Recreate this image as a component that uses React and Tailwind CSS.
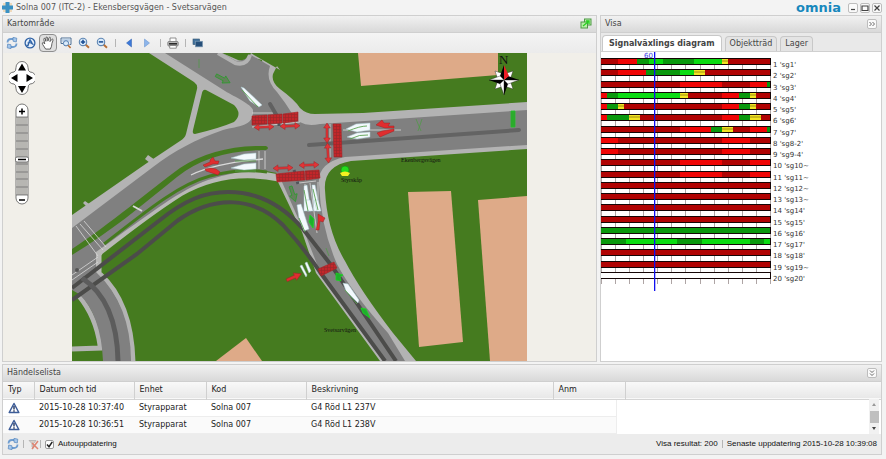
import clsx from 'clsx';

// D/R dark and bright red, G/g dark and bright green, Y yellow, W empty
const COLORS = { D: '#b00303', R: '#f00505', G: '#0a980d', g: '#0bdc12', Y: '#f2e321', W: '#ffffff' };

const signals = [
    { label: "1 'sg1'", phases: 'D17 R36 G48 g62 G93 g121 Y127 D169' },
    { label: "2 'sg2'", phases: 'D17 R45 G79 g93 Y104 D169' },
    { label: "3 'sg3'", phases: 'D79 R121 D149 R166 G169' },
    { label: "4 'sg4'", phases: 'R6 G17 g79 Y87 D121 R138 G149 Y155 D169' },
    { label: "5 'sg5'", phases: 'R6 G17 Y23 D121 R138 G149 Y155 D169' },
    { label: "6 'sg6'", phases: 'R6 G28 Y39 D121 R138 G149 Y160 D169' },
    { label: "7 'sg7'", phases: 'D79 R110 G121 Y132 D149 R166 G169' },
    { label: "8 'sg8-2'", phases: 'R17 D121 R149 D169' },
    { label: "9 'sg9-4'", phases: 'R17 D121 R149 D169' },
    { label: "10 'sg10~", phases: 'D79 R121 D149 R169' },
    { label: "11 'sg11~", phases: 'D79 R121 D149 R169' },
    { label: "12 'sg12~", phases: 'D169' },
    { label: "13 'sg13~", phases: 'D169' },
    { label: "14 'sg14'", phases: 'D169' },
    { label: "15 'sg15'", phases: 'D169' },
    { label: "16 'sg16'", phases: 'G169' },
    { label: "17 'sg17'", phases: 'G25 g76 G101 g149 G163 g169' },
    { label: "18 'sg18'", phases: 'D169' },
    { label: "19 'sg19~", phases: 'D169' },
    { label: "20 'sg20'", phases: 'W169' },
];

const events = [
    { time: '2015-10-28 10:37:40', unit: 'Styrapparat', code: 'Solna 007', text: 'G4 Röd L1 237V' },
    { time: '2015-10-28 10:36:51', unit: 'Styrapparat', code: 'Solna 007', text: 'G4 Röd L1 238V' },
];

function PanelHeader({ title, children }) {
    return (
        <div className="flex h-[17px] shrink-0 items-center justify-between border-b border-[#cfcfcf] bg-linear-to-b from-[#f1f1f1] to-[#d9d9d9] pr-1 pl-1">
            <h2 className="text-[8px] leading-3 text-[#444]">{title}</h2>
            {children}
        </div>
    );
}

function ToolButton({ label, active, narrow, children }) {
    return (
        <button
            type="button"
            aria-label={label}
            className={clsx('flex h-[18px] items-center justify-center', narrow ? 'w-4' : 'w-[18px]', {
                'rounded-sm border border-[#8f8f8f] bg-[#dedede]': active,
            })}
        >
            {children}
        </button>
    );
}

function Separator() {
    return <span className="mx-1 h-2 w-px bg-[#b5b5b5]" />;
}

function Icon({ children, className }) {
    return (
        <svg viewBox="0 0 12 12" className={clsx('shrink-0', className ?? 'h-3 w-3')} fill="none">
            {children}
        </svg>
    );
}

function RefreshIcon() {
    return (
        <Icon>
            <path d="M1.5 5.5Q1.700 2 5 2H7.500" stroke="#6f9dd0" strokeWidth="1.8" />
            <path d="M7 .3 10.8 1.2 10.3 5 7 4.2Z" fill="#a5c6ea" stroke="#4379b5" strokeWidth=".6" />
            <path d="M10.5 6.5Q10.300 10 7 10H4.500" stroke="#6f9dd0" strokeWidth="1.8" />
            <path d="M5 11.7 1.2 10.8 1.7 7 5 7.8Z" fill="#a5c6ea" stroke="#4379b5" strokeWidth=".6" />
        </Icon>
    );
}

function GlobeIcon() {
    return (
        <Icon>
            <circle cx="6" cy="6" r="4.9" fill="#e7f0fb" stroke="#2f62a5" strokeWidth="1.3" />
            <path d="M6 2.5 4 8.6 2.3 8M6 2.5 8.5 7 9.6 7.5M3.6 6.2Q6 4.7 8.5 7" stroke="#2f62a5" strokeWidth="1.3" />
            <path d="M4.8 5 6 2.6 7.2 5Z" fill="#3f77bd" />
        </Icon>
    );
}

function HandIcon() {
    return (
        <Icon className="h-[14px] w-[14px]">
            <path
                d="M4 11.2 1.4 7.2Q.6 5.8 1.6 5.6 2.3 5.5 3.2 6.8L2.4 2.8Q2.4 1.8 3.1 1.9 3.7 1.9 4.2 4.6L4.3 1.6Q4.5.6 5.1.8 5.8.8 5.9 4.4L6.9 1.5Q7.3.8 7.9 1.2 8.3 1.5 7.7 4.8L9.3 2.9Q10 2.4 10.3 3 10.5 3.6 9.4 6.3 9.3 8.9 8 11.2Z"
                fill="#fff"
                stroke="#444"
                strokeWidth=".7"
            />
        </Icon>
    );
}

function ZoomIcon({ sign }) {
    return (
        <Icon>
            <path d="m7.5 7.5 3.5 3.3" stroke="#b96f35" strokeWidth="1.9" />
            <circle cx="5" cy="4.9" r="3.7" fill="#d9eafa" stroke="#5e86b3" strokeWidth="1.1" />
            <path d={sign === '+' ? 'M5 2.7v4.4M2.8 4.9h4.4' : 'M2.8 4.9h4.4'} stroke="#164a91" strokeWidth="1.5" />
        </Icon>
    );
}

function ZoomAreaIcon() {
    return (
        <Icon>
            <path d="M3 6.5H1V1h10v6.5H9.5" stroke="#4e7196" strokeWidth="1" />
            <path d="M2 1.7h8v3H2z" fill="#bdd2e8" />
            <circle cx="6" cy="6.3" r="2.6" fill="#d9eafa" stroke="#4f7bad" strokeWidth="1" />
            <path d="m8 8.3 2.6 2.6" stroke="#b96f35" strokeWidth="1.6" />
        </Icon>
    );
}

function PrinterIcon() {
    return (
        <Icon>
            <path d="M3 4.5V1h6v3.5" fill="#fff" stroke="#777" strokeWidth=".8" />
            <rect x=".8" y="4.5" width="10.4" height="4.5" rx="1" fill="#b5b5b5" stroke="#777" strokeWidth=".8" />
            <path d="M2 6.8h8" stroke="#222" strokeWidth="1.5" />
            <path d="M2.7 8.5h6.6v2.7H2.7z" fill="#fff" stroke="#777" strokeWidth=".8" />
        </Icon>
    );
}

function Toolbar() {
    return (
        <div className="flex h-5 shrink-0 items-center bg-linear-to-b from-[#f4f4f4] to-[#ebebeb]">
            <ToolButton label="Uppdatera">
                <RefreshIcon />
            </ToolButton>
            <ToolButton label="Hela kartan">
                <GlobeIcon />
            </ToolButton>
            <ToolButton label="Panorera" active>
                <HandIcon />
            </ToolButton>
            <ToolButton label="Zooma område">
                <ZoomAreaIcon />
            </ToolButton>
            <ToolButton label="Zooma in">
                <ZoomIcon sign="+" />
            </ToolButton>
            <ToolButton label="Zooma ut">
                <ZoomIcon sign="-" />
            </ToolButton>
            <Separator />
            <ToolButton label="Föregående">
                <Icon>
                    <path d="M8.5 2v8L3.5 6Z" fill="#3c78d8" stroke="#2b5cad" strokeWidth=".5" />
                </Icon>
            </ToolButton>
            <ToolButton label="Nästa">
                <Icon>
                    <path d="M3.5 2v8l5-4Z" fill="#8db5ea" stroke="#5e8fce" strokeWidth=".5" />
                </Icon>
            </ToolButton>
            <Separator />
            <ToolButton label="Skriv ut" narrow>
                <PrinterIcon />
            </ToolButton>
            <Separator />
            <ToolButton label="Lager" narrow>
                <Icon>
                    <rect x="1" y="2" width="6.5" height="5.5" fill="#45749e" stroke="#31536f" strokeWidth=".6" />
                    <rect x="3.500" y="4.3" width="7" height="5.500" fill="#264f79" stroke="#7795b0" strokeWidth=".7" />
                </Icon>
            </ToolButton>
        </div>
    );
}

function PanZoomControl() {
    return (
        <svg viewBox="0 0 26 146" className="absolute top-[6px] left-[6px] h-[146px] w-[26px]">
            <path
                d="M7 8.5a6 6 0 0 1 12 0q0 4 2 4.500a6 6 0 0 1 0 12q-2 .5-2 4.500a6 6 0 0 1-12 0q0-4-2-4.500a6 6 0 0 1 0-12q2-.5 2-4.500Z"
                fill="#fff"
                stroke="#555"
                strokeWidth=".8"
            />
            <path d="M13 4.500l4 7H9ZM13 34l4-7H9ZM2 19l6.500-4v8ZM24 19l-6.500-4v8Z" fill="#000" />
            <path d="M7 51a6 6 0 0 1 12 0v88a6 6 0 0 1-12 0Z" fill="#fff" stroke="#555" strokeWidth=".8" />
            <rect x="7.500" y="58" width="11" height="78" fill="#b7b6b2" />
            {[66, 74, 82, 90, 105, 113, 120, 128].map((y) => (
                <path key={y} d={`M7 ${y}h12`} stroke="#666" strokeWidth=".7" />
            ))}
            <path d="M7 58h12M7 136h12" stroke="#555" strokeWidth=".7" />
            <rect x="6.500" y="98" width="13" height="5" rx="1.500" fill="#fff" stroke="#555" strokeWidth=".8" />
            <path d="M9 100.500h8M10 52.500h6M13 49.500v6M10 141h6" stroke="#000" strokeWidth="1.500" />
        </svg>
    );
}

// Stop lines and pedestrian crossings share the hatched red block
const crossings = [
    '252,116 267,115 267,124 252,125',
    '268,115 282,114 282,123 268,124',
    '283,114 298,112 298,121 283,123',
    '333,124 341,124 342,157 334,157',
    '276,174 304,171 305,180 277,182',
    '305,171 319,170 320,178 306,180',
    '318,269 334,262 337,268 321,276',
];

const doubleArrows = [
    [264, 127, -2],
    [290, 126, -2],
    [283, 168, -2],
    [309, 165, -2],
    [327, 133, 90],
    [328, 153, 87],
];

const vehicles = [
    '241,87 244,88 262,105 259,107 250,101',
    '231,158 244,154 256,153 256,159 244,160',
    '231,168 244,164 256,163 256,169 244,170',
    '346,129 356,124 370,123 370,130 357,132',
    '347,137 357,133 370,132 370,137 357,139',
    '304,186 307,185 311,211 304,211',
    '312,185 315,185 320,211 314,211',
    '297,205 301,204 309,229 304,231 299,218',
    '305,200 310,200 313,211 308,211',
    '314,200 318,200 321,211 317,211',
    '343,283 348,284 359,300 358,303 346,291',
];

function SiteMap() {
    return (
        <svg viewBox="72 53 455 308" className="h-full w-full" role="img" aria-label="Ekensbersgvägen - Svetsarvägen">
            <defs>
                <clipPath id="site">
                    <path d="M72 53h455v308H72z" />
                </clipPath>
                <pattern id="hatch" width="3" height="3" patternUnits="userSpaceOnUse">
                    <path d="M0 0h3v3H0z" fill="#c3262a" />
                    <path d="M0 .5h3M.5 0v3" stroke="#96282a" strokeWidth=".6" />
                </pattern>
                <g id="double-arrow">
                    <path d="M-10 0-5-3.300V-1H5v-2.300L10 0 5 3.300V1H-5v2.300Z" fill="#e33336" stroke="#9b2527" strokeWidth=".5" />
                </g>
                <g id="arrow">
                    <path d="M-8-1.500H1v-2.500L8 0 1 4V1.500H-8Z" />
                </g>
            </defs>
            <g clipPath="url(#site)" fill="none">
                <path d="M72 53h455v308H72z" fill="#457b1f" />

                {/* buildings */}
                <g fill="#deaa88">
                    <path d="M358 53H498V75L361 86Z" />
                    <path d="M408 192 451 191 463 342 419 347Z" />
                    <path d="M478 200 527 196V361H490Z" />
                    <path d="M246 338 262 361H216Z" />
                </g>

                {/* pavements */}
                <g fill="#b3b3b3">
                    <path d="M149 53 194 82Q198 85 197 89L186 134Q185 138 180 141L147 163 72 215V230L160 190 260 130V100L250 92 180 53Z" />
                    <path d="M150 163 145 159 148 155 155 160 153 164ZM87 207 83 203 85 201 92 206 90 210Z" />
                    <path d="M218 53 236 64Q243 65 247 62L251 53 254 55 280 70 277 66 273 74Q271 82 280 89 295 100 300 108 306 114 315 114L363 113 527 102V149L351 161Q323 166 325 190 327 231 345 261 360 290 393 333L416 361H380L316 273 302 232 278 182 270 130 262 60 222 50Z" />
                </g>
                <path d="M98 276V256Q98 252 103 249 150 212 180 193 225 167 279 178" stroke="#b9b9b7" strokeWidth="7" />
                <path d="M100 274Q132 303 133 364" stroke="#b3b3b3" strokeWidth="5" />
                <path d="M79 296Q96 317 100 345V348L72 349" stroke="#b3b3b3" strokeWidth="5" />

                {/* carriageways */}
                <path
                    d="M165 53H222L236 61Q245 61 249 54L270 66Q265 80 277 92 285 102 293 115 300 128 320 124L527 110V145L345 157Q317 163 319 184 321 228 337 264 352 293 388 333L405 361H384L320 272 306 236 282 182 277 173Q250 166 208 180C180 190 155 210 96 252V272Q131 305 131 361H103Q101 315 79 294L72 290V228L153 167C175 150 195 140 223 130 240 126 254 126 253 110 251 104 235 97 225 91Z"
                    fill="#808080"
                />
                <path d="M222 53H250L247 57Q244 61 238 60Z" fill="#457b1f" />
                <path d="M218 53 235 63Q247 66 250 55" stroke="#b3b3b3" strokeWidth="4" />
                <path d="M206 90 234 105Q243 114 234 122 220 128 195 134 192 134 193 130L202 93Q203 89 206 90Z" fill="#457b1f" />
                <path d="M72 249C110 224 150 190 180 168Q215 145 266 146 270 148 266 150 210 150 177 177C140 207 110 232 72 255Z" fill="#457b1f" />
                <path d="M104 244C150 208 180 184 210 176Q240 168 267 172" stroke="#457b1f" strokeWidth="3" />

                {/* lane markings */}
                <g stroke="#d9d9d9" strokeWidth=".8">
                    <path d="M191 175Q215 163 263 159" strokeWidth="1.300" />
                    <path d="M259 151V169M265 151V169M252 113H273M252 127 300 122M330 124V158M343 130H401M76 226 98 256M80 224 103 250M84 221 106 247M72 275 98 257M72 280 98 262" />
                    <path d="M305 184V200M310 183 317 233M318 182V211M299 183 316 181" />
                    <path d="M133 206 142 211" strokeWidth="2" />
                </g>

                {/* tram rails and dark tracks */}
                <g stroke="#4c4c4a" strokeWidth="4">
                    <path d="M72 288 160 220C185 200 205 192 228 192 262 192 285 208 303 229L331 265 396 361" />
                    <path d="M72 300 137 254 177 221C215 194 255 197 283 225Q304 248 320 272L385 361" />
                </g>
                <path d="M82 278Q117 301 118 361" stroke="#5c5c5c" strokeWidth="5" />
                <path d="M309 145 519 130" stroke="#636363" strokeWidth="4" strokeLinecap="round" />
                <path d="M270 104 277 116" stroke="#606060" strokeWidth="4" strokeLinecap="round" />
                <path d="M279 123v4M294 170l4 14" stroke="#50545a" strokeWidth="3" strokeDasharray="3 1" />
                <circle cx="77" cy="270" r="2" fill="#555" />

                {/* vehicles */}
                <g fill="#f3f9fd" stroke="#a9cbd0" strokeWidth=".5">
                    {vehicles.map((points) => (
                        <polygon key={points} points={points} />
                    ))}
                    <path d="M300 266 302 265 307 275 306 277ZM305 263 307 262 311 271 309 273Z" />
                </g>
                <g stroke="#5aa24f" strokeWidth=".9">
                    <path d="M242 90 258 107M235 161H256M235 171H256M348 131Q360 126 367 126M350 139Q360 134 368 135M304 190 308 211M313 189 318 210M299 218 305 232M345 290 357 304" />
                </g>

                {/* signals */}
                {crossings.map((points) => (
                    <polygon key={points} points={points} fill="url(#hatch)" stroke="#a82426" strokeWidth=".6" />
                ))}
                {doubleArrows.map(([x, y, angle]) => (
                    <use key={`${x}-${y}`} href="#double-arrow" transform={`translate(${x} ${y}) rotate(${angle})`} />
                ))}
                <g fill="#e02d2f" stroke="#9b2527" strokeWidth=".5">
                    <use href="#arrow" transform="translate(294 277) rotate(-24)" />
                    <path d="M203 165 210 162 210 160 213 157 215 161 219 161 218 164 213 164 205 167ZM205 169 211 168 216 169 220 172 218 175 212 173 206 171Z" />
                    <path d="M376 125 382 120 384 123 390 123 388 126 394 126V128L385 128 382 127ZM377 133 382 131 394 129V131L387 134 380 137Z" />
                    <path d="M318 214 325 218 323 222 320 221 319 230H316L318 222Z" />
                </g>
                <g fill="#33992f" stroke="#19d81f" strokeWidth=".8">
                    <use href="#arrow" transform="translate(223 79) rotate(28)" fill="#64815c" stroke="#2e9a2e" />
                    <use href="#arrow" transform="translate(293 194) rotate(72)" fill="#64815c" stroke="#2e9a2e" />
                    <path d="M310 215 314 219 313 228 309 222ZM336 273 343 275 340 277 341 281 336 280ZM361 308 366 309 370 318 363 313Z" fill="#1fae2c" />
                    <path d="M199 59v9M416 119 421 131M422 119 418 131M326 248 329 256" strokeWidth=".7" stroke="#4c9c42" />
                    <path d="M511 111h4v16h-4zM513 111v16" stroke="#21c82a" />
                </g>
                <circle cx="345" cy="170" r="4" fill="#25dc1c" stroke="#168d18" strokeWidth=".6" />
                <path d="M340 173Q345 170 350 173L348 176H342Z" fill="#f4f122" />

                {/* compass */}
                <g transform="translate(504 80)">
                    <path d="M-9-9-3-7 0-10 3-7 9-9 7-3 10 0 7 3 9 9 3 7 0 10-3 7-9 9-7 3-10 0-7-3Z" fill="#fff" stroke="#222" strokeWidth=".4" />
                    <path d="M0-15-4-4 0 0ZM15 0 4-4 0 0ZM0 15 4 4 0 0ZM-15 0-4 4 0 0Z" fill="#000" />
                    <path d="M0-15 5-4 0 0Z" fill="#ed1c24" />
                    <path d="M15 0 4 4 0 0ZM0 15-4 4 0 0ZM-15 0-4-4 0 0Z" fill="#fff" stroke="#111" strokeWidth=".4" />
                </g>
                <g fill="#111" fontFamily="'Liberation Serif', serif">
                    <text x="499" y="64" fontSize="13">N</text>
                    <text x="401" y="162" fontSize="6">Ekenbergsvägen</text>
                    <text x="341" y="182" fontSize="6">Styrskåp</text>
                    <text x="324" y="332" fontSize="6">Svetsarvägen</text>
                </g>
            </g>
        </svg>
    );
}

function SignalBar({ phases, y }) {
    let start = 0;
    const parts = phases.split(' ').map((part) => {
        const end = Number(part.slice(1));
        const segment = { x: start, width: end - start, kind: part[0] };
        start = end;
        return segment;
    });
    return (
        <g>
            {parts.map(({ x, width, kind }) => (
                <g key={x}>
                    <rect x={x} y={y} width={width} height="6" fill={COLORS[kind]} />
                    {kind === 'Y' && <path d={`M${x} ${y + 3}h${width}`} stroke="#8d7a12" strokeWidth=".8" />}
                </g>
            ))}
            <path d={`M0 ${y + 0.5}H169M0 ${y + 6.5}H169M169.500 ${y}v7`} stroke="#140505" strokeWidth="1" />
        </g>
    );
}

function SignalDiagram() {
    return (
        <svg viewBox="0 0 280 300" className="block h-[300px] w-[280px]">
            {Array.from({ length: 13 }, (_, i) => (
                <path key={i} d={`M${Math.round(i * 14.08) + 0.5} 11V232`} stroke="#8d8080" strokeWidth="1" opacity=".7" />
            ))}
            {signals.map(({ label, phases }, i) => (
                <g key={label}>
                    <SignalBar phases={phases} y={Math.round(6 + i * 11.25)} />
                    <text x="172" y={Math.round(15 + i * 11.25)} fontSize="7" fill="#333" fontFamily="'DejaVu Sans', sans-serif">
                        {label}
                    </text>
                </g>
            ))}
            <rect x="53" y="0" width="1" height="239" fill="#1010f0" />
            <rect x="54" y="0" width="1" height="239" fill="#1010f0" opacity=".3" />
            <text x="43" y="6" fontSize="7" fill="#3a3ae6" fontFamily="'DejaVu Sans', sans-serif">
                60
            </text>
        </svg>
    );
}

function Tab({ active, children }) {
    return (
        <button
            type="button"
            role="tab"
            aria-selected={Boolean(active)}
            className={clsx(
                'rounded-t-sm border border-b-0 border-[#c8c8c8] text-[8px] leading-3 text-[#444]',
                active ? 'h-4 bg-white px-[6px] font-bold' : 'h-[15px] bg-[#e4e4e4] px-1'
            )}
        >
            {children}
        </button>
    );
}

function WindowButton({ label, children }) {
    return (
        <button
            type="button"
            aria-label={label}
            className="flex h-[10px] w-[10px] items-center justify-center rounded-xs border border-[#bdbdbd] bg-[#fafafa]"
        >
            <svg viewBox="0 0 8 8" className="h-2 w-2" fill="none" stroke="#444" strokeWidth="1.200">
                {children}
            </svg>
        </button>
    );
}

function EventList() {
    return (
        <section className="shrink-0 border border-[#cfcfcf] bg-white">
            <PanelHeader title="Händelselista">
                <WindowButton label="Fäll ihop">
                    <path d="m2 1.500 2 2 2-2M2 4.500l2 2 2-2" strokeWidth=".8" />
                </WindowButton>
            </PanelHeader>
            <div className="relative h-[52px] overflow-hidden">
                <table className="w-full table-fixed text-left text-[8px] leading-3 text-[#222]">
                    <thead>
                        <tr className="h-[17px] border-b border-[#d5d5d5] bg-linear-to-b from-[#f9f9f9] to-[#e8e8e8]">
                            <th className="w-[31px] border-r border-[#d0d0d0] pl-[5px] font-normal">Typ</th>
                            <th className="w-[100px] border-r border-[#d0d0d0] pl-[5px] font-normal">Datum och tid</th>
                            <th className="w-[72px] border-r border-[#d0d0d0] pl-[5px] font-normal">Enhet</th>
                            <th className="w-[100px] border-r border-[#d0d0d0] pl-[5px] font-normal">Kod</th>
                            <th className="w-[247px] border-r border-[#d0d0d0] pl-[5px] font-normal">Beskrivning</th>
                            <th className="w-[72px] border-r border-[#d0d0d0] pl-[5px] font-normal">Anm</th>
                            <th />
                        </tr>
                    </thead>
                    <tbody>
                        {events.map(({ time, unit, code, text }, i) => (
                            <tr key={time} className="h-[17px]">
                                <td className={clsx('border-b border-[#ededed] pl-[5px]', i && 'bg-[#fafafa]')}>
                                    <Icon>
                                        <path d="M6 1.500 10.800 10.500H1.200Z" fill="#fff" stroke="#3c5c98" strokeWidth="1.500" strokeLinejoin="round" />
                                        <path d="M6 4v3.500M6 8.300v1.400" stroke="#20335c" strokeWidth="1.400" />
                                    </Icon>
                                </td>
                                {[time, unit, code, text].map((value) => (
                                    <td key={value} className={clsx('border-b border-[#ededed] pl-[5px]', i && 'bg-[#fafafa]')}>
                                        {value}
                                    </td>
                                ))}
                                <td>
                                    <div
                                        className={clsx('h-[17px] w-16 border-r border-b border-[#ededed]', i && 'bg-[#fafafa]')}
                                    />
                                </td>
                                <td />
                            </tr>
                        ))}
                    </tbody>
                </table>
                <div className="absolute top-[17px] right-[2px] bottom-0 flex w-[10px] flex-col items-center justify-between bg-[#f1f1f1] py-1">
                    <svg viewBox="0 0 4 3" className="h-[3px] w-1">
                        <path d="M2 0 4 3H0Z" fill="#999" />
                    </svg>
                    <span className="h-3 w-[9px] bg-[#bfbfbf]" />
                    <svg viewBox="0 0 4 3" className="h-[3px] w-1">
                        <path d="M2 3 4 0H0Z" fill="#444" />
                    </svg>
                </div>
            </div>
            <footer className="flex h-5 items-center justify-between bg-[#ececec] pr-1 pl-1 font-['Liberation_Sans',sans-serif] text-[8px] leading-3 text-[#111]">
                <div className="flex items-center">
                    <button type="button" aria-label="Uppdatera">
                        <RefreshIcon />
                    </button>
                    <Separator />
                    <button type="button" aria-label="Rensa filter">
                        <Icon>
                            <path d="M1 2.500H8L5.500 5.500V10L4 9V5.500Z" fill="#d8d0c8" stroke="#aaa" strokeWidth=".7" />
                            <path d="m4 5 6 6M10 3 4 11" stroke="#df8572" strokeWidth="1.500" />
                        </Icon>
                    </button>
                    <span className="mr-1 h-2 w-px bg-[#b5b5b5]" />
                    <label className="flex items-center gap-1">
                        <span className="relative flex h-[9px] w-[9px]">
                            <input
                                type="checkbox"
                                defaultChecked
                                className="peer h-full w-full appearance-none rounded-xs border border-[#999] bg-white"
                            />
                            <svg viewBox="0 0 9 9" className="pointer-events-none absolute inset-0 hidden peer-checked:block" fill="none">
                                <path d="m2 4.500 2 2.200 3.300-4.900" stroke="#222" strokeWidth="1.500" />
                            </svg>
                        </span>
                        Autouppdatering
                    </label>
                </div>
                <div className="flex items-center">
                    <span>Visa resultat: 200</span>
                    <Separator />
                    <span>Senaste uppdatering 2015-10-28 10:39:08</span>
                </div>
            </footer>
        </section>
    );
}

export default function App() {
    return (
        <div className="flex h-screen flex-col bg-[#f3f3f3] pr-1 pb-1 pl-[2px] font-['DejaVu_Sans',sans-serif]">
            <header className="flex h-[15px] shrink-0 items-center justify-between">
                <div className="flex items-center gap-[3px]">
                    <svg viewBox="0 0 11 11" className="h-[11px] w-[11px]">
                        <path d="M1 1h9v9H1z" fill="#efd9bb" />
                        <path d="M3.500 0h4v3.500H11v4H7.500V11h-4V7.500H0v-4h3.500Z" fill="#3a91c4" />
                    </svg>
                    <h1 className="text-[8px] leading-3 text-[#555]">Solna 007 (ITC-2) - Ekensbersgvägen - Svetsarvägen</h1>
                </div>
                <div className="flex items-center gap-[2px]">
                    <span className="mr-[5px] text-[13px] leading-3 font-bold text-[#1788bd]">omnia</span>
                    <WindowButton label="Minimera">
                        <path d="M2 5.500h4" />
                    </WindowButton>
                    <WindowButton label="Maximera">
                        <path d="M1 2h6v4.500H1Z" />
                    </WindowButton>
                    <WindowButton label="Stäng">
                        <path d="m1.500 1.500 5 5M6.500 1.500l-5 5" />
                    </WindowButton>
                </div>
            </header>

            <main className="flex min-h-0 flex-1 gap-[3px] pb-[2px]">
                <section className="flex min-w-0 flex-1 flex-col border border-[#cfcfcf]">
                    <PanelHeader title="Kartområde">
                        <Icon>
                            <rect x="4.500" y="1" width="6.500" height="6" fill="#b9efa8" stroke="#4c9a45" />
                            <rect x="1" y="4" width="6.500" height="6" fill="#b9efa8" stroke="#4c9a45" />
                            <path d="M3 8 8.500 3.500M6 3h3v3" stroke="#28d022" strokeWidth="1.300" />
                        </Icon>
                    </PanelHeader>
                    <Toolbar />
                    <div className="relative min-h-0 flex-1 bg-[#f1efe9]">
                        <SiteMap />
                        <PanZoomControl />
                    </div>
                </section>
                <section className="flex w-[282px] shrink-0 flex-col border border-[#cfcfcf] bg-white">
                    <PanelHeader title="Visa">
                        <WindowButton label="Dölj">
                            <path d="m1.500 2 2 2-2 2M4.500 2l2 2-2 2" strokeWidth=".8" />
                        </WindowButton>
                    </PanelHeader>
                    <div role="tablist" className="flex h-[19px] shrink-0 items-end gap-[3px] border-b border-[#d0d0d0] bg-[#e9e9e9] pl-[1px]">
                        <Tab active>Signalväxlings diagram</Tab>
                        <Tab>Objektträd</Tab>
                        <Tab>Lager</Tab>
                    </div>
                    <div className="min-h-0 flex-1 overflow-hidden">
                        <SignalDiagram />
                    </div>
                </section>
            </main>

            <EventList />
        </div>
    );
}
